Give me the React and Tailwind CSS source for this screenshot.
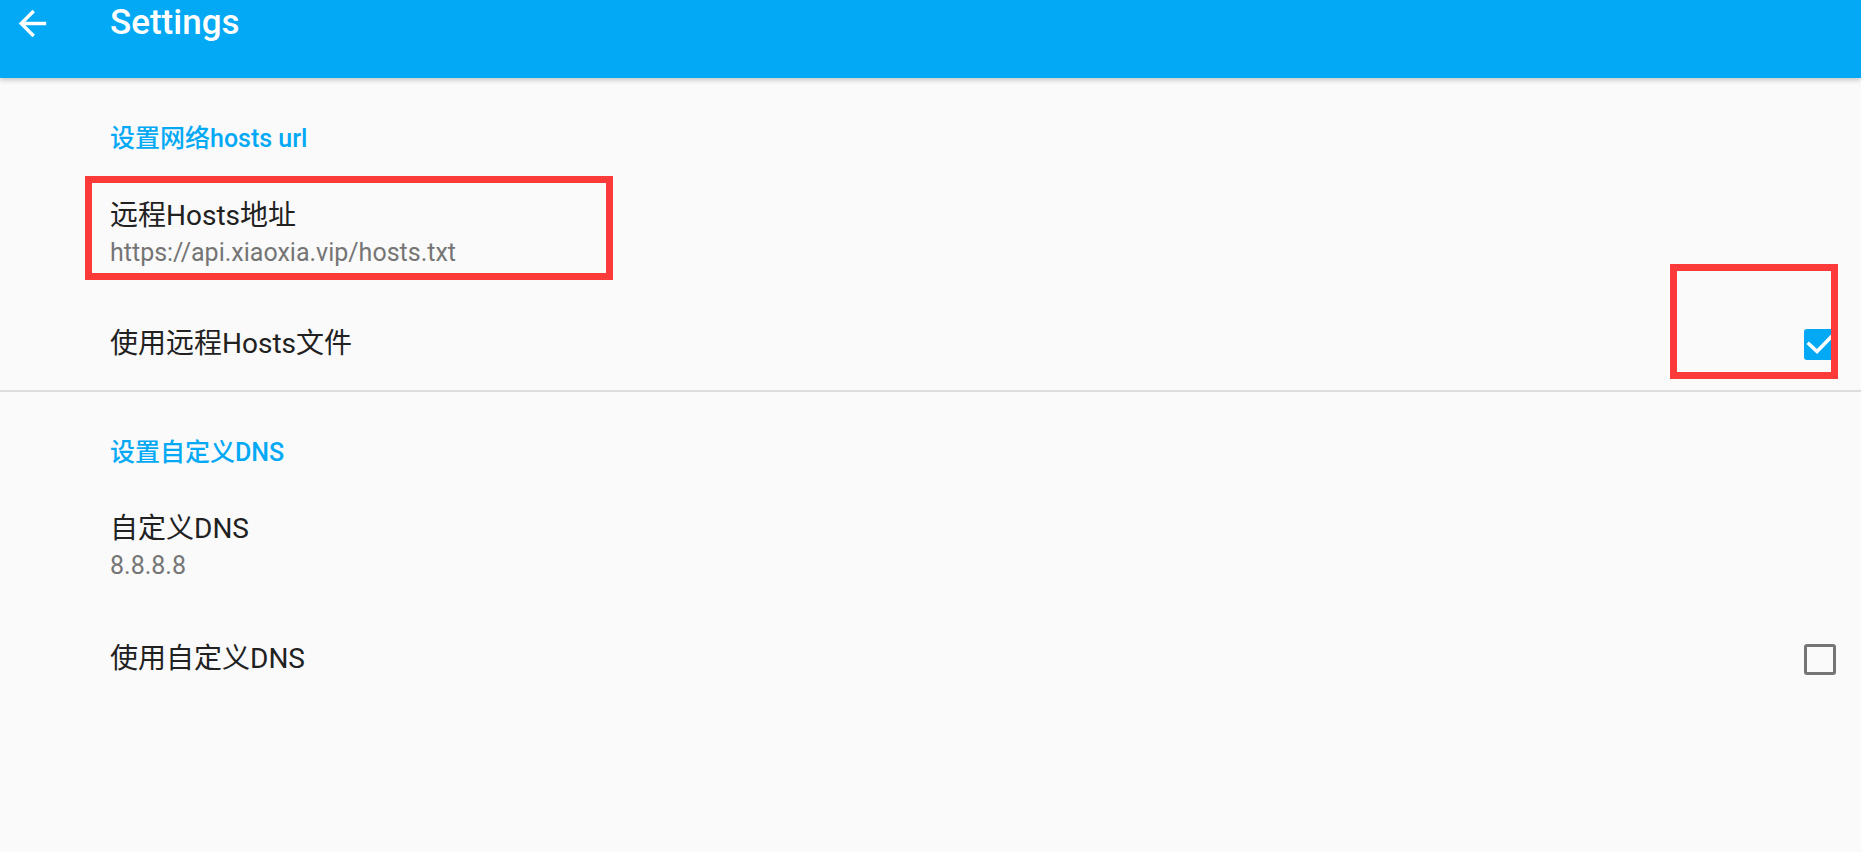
import React from "react";

function ArrowBack() {
  return (
    <svg width="41" height="41" viewBox="0 0 24 24" fill="#ffffff">
      <path d="M20 11H7.83l5.59-5.59L12 4l-8 8 8 8 1.41-1.41L7.83 13H20v-2z" />
    </svg>
  );
}

function Checkbox({ checked }) {
  if (checked) {
    return (
      <div className="w-[32px] h-[31px] rounded-[3px] bg-[#03A9F4] flex items-center justify-center">
        <svg width="32" height="31" viewBox="0 0 32 31" fill="none">
          <polyline points="5,15 13,22.5 27,8" stroke="#ffffff" strokeWidth="3.6" strokeLinecap="square" strokeLinejoin="miter" />
        </svg>
      </div>
    );
  }
  return <div className="w-[32px] h-[31px] rounded-[3px] border-[3px] border-[#757575]" />;
}

function Category({ children }) {
  return (
    <div className="pt-[46px] pl-[110px] text-[25px] leading-[30px] font-medium text-[#03A9F4]">
      {children}
    </div>
  );
}

function SummaryPref({ title, summary, pt }) {
  return (
    <div className={`${pt} pb-[30px] pl-[110px] flex flex-col`}>
      <div className="text-[28px] leading-[34px] text-[#212121]">{title}</div>
      <div className="mt-[5px] text-[25px] leading-[30px] text-[#757575]">{summary}</div>
    </div>
  );
}

function CheckPref({ title, checked }) {
  return (
    <div className="h-[92px] pl-[110px] pr-[25px] flex items-center justify-between">
      <div className="text-[28px] leading-[34px] text-[#212121]">{title}</div>
      <Checkbox checked={checked} />
    </div>
  );
}

export default function App() {
  return (
    <div className="relative min-h-screen bg-[#FAFAFA] font-['Roboto','Noto_Sans_CJK_SC',sans-serif]">
      <header className="relative z-10 h-[78px] bg-[#03A9F4] shadow-[0_2px_5px_rgba(0,0,0,0.22)]">
        <div className="h-[46px] pl-[12px] flex items-center">
          <ArrowBack />
          <span className="ml-[57px] text-[35px] leading-[42px] font-medium text-white">Settings</span>
        </div>
      </header>

      <Category>设置网络hosts url</Category>
      <SummaryPref pt="pt-[45px]" title="远程Hosts地址" summary="https://api.xiaoxia.vip/hosts.txt" />
      <CheckPref title="使用远程Hosts文件" checked={true} />
      <div className="h-[2px] bg-[#dddddd]" />

      <Category>设置自定义DNS</Category>
      <SummaryPref pt="pt-[44px]" title="自定义DNS" summary="8.8.8.8" />
      <div className="pt-[2px]">
        <CheckPref title="使用自定义DNS" checked={false} />
      </div>

      <div className="absolute left-[85px] top-[176px] w-[528px] h-[104px] border-[7px] border-[#FC3A3A] z-20" />
      <div className="absolute left-[1670px] top-[264px] w-[168px] h-[115px] border-[7px] border-[#FC3A3A] z-20" />
    </div>
  );
}
